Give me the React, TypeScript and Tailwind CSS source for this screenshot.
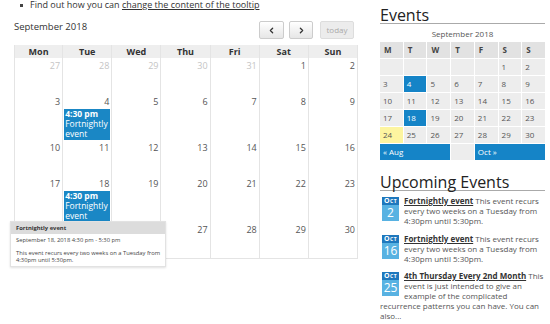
import { ChevronLeft, ChevronRight } from "lucide-react";

const weeks = [
  [27, 28, 29, 30, 31, 1, 2],
  [3, 4, 5, 6, 7, 8, 9],
  [10, 11, 12, 13, 14, 15, 16],
  [17, 18, 19, 20, 21, 22, 23],
  [24, 25, 26, 27, 28, 29, 30],
];
const heads = ["Mon", "Tue", "Wed", "Thu", "Fri", "Sat", "Sun"];
const rowH = ["h-[36px]", "h-[46px]", "h-[36px]", "h-[46px]", "h-[36px]"];

const mini = [
  [0, 0, 0, 0, 0, 1, 2],
  [3, 4, 5, 6, 7, 8, 9],
  [10, 11, 12, 13, 14, 15, 16],
  [17, 18, 19, 20, 21, 22, 23],
  [24, 25, 26, 27, 28, 29, 30],
];

const upcoming = [
  { day: 2, title: "Fortnightly event", text: "This event recurs every two weeks on a Tuesday from 4:30pm until 5:30pm.", mt: "mt-[5px]" },
  { day: 16, title: "Fortnightly event", text: "This event recurs every two weeks on a Tuesday from 4:30pm until 5:30pm.", mt: "mt-[8px]" },
  { day: 25, title: "4th Thursday Every 2nd Month", text: "This event is just intended to give an example of the complicated recurrence patterns you can have. You can also...", mt: "mt-[7px]" },
];

const Event = () => (
  <div className="mx-px mt-px bg-[#1a87c5] px-px pb-px text-[8.5px] leading-[10px] text-white">
    <div className="font-bold">4:30 pm</div>
    <div>Fortnightly event</div>
  </div>
);

const Calendar = () => {
  return (
    <div className="ml-[14px] w-[344px]">
      <ul className="-mt-px ml-[6px] text-[9px] leading-[12px] text-[#333]">
        <li className="flex items-center gap-[7px]">
          <span className="h-[3px] w-[3px] bg-[#444]" />
          <span>
            Find out how you can <span className="underline">change the content of the tooltip</span>
          </span>
        </li>
      </ul>

      <div className="mt-[10px] flex items-start justify-between">
        <h2 className="text-[9.5px] leading-[12px] text-[#333]">September 2018</h2>
        <div className="mr-[4px] flex">
          <button className="flex h-[18px] w-[25px] items-center justify-center rounded-[2px] border border-[#ccc] bg-gradient-to-b from-white to-[#e6e6e6] text-[#333]">
            <ChevronLeft size={9} strokeWidth={3.5} />
          </button>
          <button className="ml-[5px] flex h-[18px] w-[24px] items-center justify-center rounded-[2px] border border-[#ccc] bg-gradient-to-b from-white to-[#e6e6e6] text-[#333]">
            <ChevronRight size={9} strokeWidth={3.5} />
          </button>
          <button className="ml-[7px] h-[18px] w-[34px] rounded-[2px] border border-[#ddd] bg-[#ececec] text-[8px] text-[#aaa]">today</button>
        </div>
      </div>

      <div className="relative mt-[6px]">
        <div className="grid h-[13px] grid-cols-7 bg-[#eee]">
          {heads.map((h, i) => (
            <div key={h} className={`border-r border-[#e4e4e4] text-center text-[9px] font-bold leading-[13px] text-[#333] ${i === 0 ? "border-l" : ""}`}>
              {h}
            </div>
          ))}
        </div>
        <div className="border-b border-[#e4e4e4]">
          {weeks.map((w, r) => (
            <div key={r} className={`grid grid-cols-7 ${rowH[r]}`}>
              {w.map((d, c) => (
                <div key={c} className={`border-r border-[#e4e4e4] ${c === 0 ? "border-l" : ""}`}>
                  <div className={`pr-[2px] pt-px text-right text-[9px] leading-[13px] ${r === 0 && c < 5 ? "text-[#c4c4c4]" : "text-[#555]"}`}>{d}</div>
                  {(r === 1 || r === 3) && c === 1 && <Event />}
                </div>
              ))}
            </div>
          ))}
        </div>

        {/* hover tooltip for the 18th */}
        <div className="absolute left-[-4px] top-[176px] w-[156px] border border-[#e2e2e2] bg-white text-[5.8px] text-[#444] shadow-[0_1px_2px_rgba(0,0,0,0.12)]">
          <div className="h-[12px] bg-[#dcdcdc] px-[5px] font-bold leading-[12px] text-[#333]">Fortnightly event</div>
          <div className="pb-[2px] pl-[5px] pr-[2px] pt-[3px] leading-[7px]">
            <p>September 18, 2018 4:30 pm - 5:30 pm</p>
            <p className="mt-[6px]">This event recurs every two weeks on a Tuesday from 4:30pm until 5:30pm.</p>
          </div>
        </div>
      </div>
    </div>
  );
};

const Sidebar = () => {
  return (
    <div className="ml-[22px] w-[165px]">
      <h2 className="border-b border-[#aaa] pt-[7px] text-[16px] leading-[16px] text-[#222]">Events</h2>
      <div className="mt-[4px] text-center text-[8px] leading-[11px] text-[#555]">September 2018</div>
      <div className="mt-[3px] grid grid-cols-7 gap-px text-[8px] leading-[16px] text-[#555]">
        {["M", "T", "W", "T", "F", "S", "S"].map((h, i) => (
          <div key={i} className="h-[16px] bg-[#e2e2e2] pl-[4px] font-bold text-[#444]">
            {h}
          </div>
        ))}
        {mini.flat().map((d, i) => {
          const hi = d === 4 || d === 18;
          const today = d === 24;
          return (
            <div key={i} className={`h-[16px] pl-[3px] ${hi ? "bg-[#1584c7] text-white" : today ? "bg-[#fdf5a0]" : "bg-[#ededed]"}`}>
              {d || ""}
            </div>
          );
        })}
        <div className="col-span-3 h-[16px] bg-[#1584c7] pl-[3px] text-white">« Aug</div>
        <div className="h-[16px] bg-[#ededed]" />
        <div className="col-span-3 h-[16px] bg-[#1584c7] pl-[3px] text-white">Oct »</div>
      </div>

      <h2 className="mt-[7px] border-b border-[#aaa] pt-[7px] text-[16px] leading-[16px] text-[#222]">Upcoming Events</h2>
      <div className="text-[8px] leading-[10px] text-[#555]">
        {upcoming.map((e) => (
          <div key={e.day} className={e.mt}>
            <div className="float-left ml-[2px] mr-[5px] mt-px w-[17px] text-center text-white">
              <div className="h-[8px] bg-[#1e78bd] text-[7px] font-bold leading-[8px] tracking-[0.5px] [font-variant:small-caps]">Oct</div>
              <div className="h-[16px] bg-[#58b2e2] text-[12px] leading-[16px]">{e.day}</div>
            </div>
            <span className="font-bold text-[#333] underline">{e.title}</span> {e.text}
            <div className="clear-both" />
          </div>
        ))}
      </div>
    </div>
  );
};

export default function App() {
  return (
    <div className="flex h-[324px] w-[550px] overflow-hidden bg-white font-['Open_Sans',sans-serif]">
      <Calendar />
      <Sidebar />
    </div>
  );
}
